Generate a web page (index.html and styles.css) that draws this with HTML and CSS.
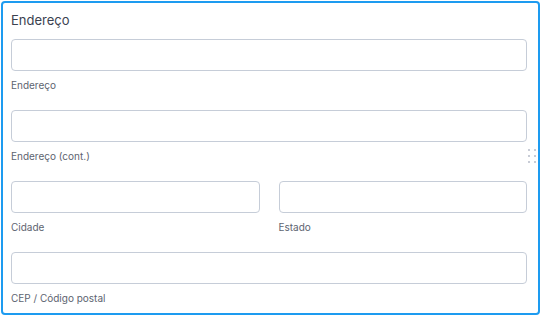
FILE: index.html
```html
<!DOCTYPE html>
<html lang="pt">
<head>
    <meta charset="UTF-8">
    <meta name="viewport" content="width=device-width, initial-scale=1.0">
    <title>Endereço</title>
    <link rel="stylesheet" href="styles.css">
</head>
<body>
    <div class="address-box">
        <div class="box-title">Endereço</div>

        <div class="field">
            <input type="text" class="field-input">
            <div class="field-label">Endereço</div>
        </div>

        <div class="field">
            <input type="text" class="field-input">
            <div class="field-label">Endereço (cont.)</div>
        </div>

        <div class="field-row">
            <div class="field">
                <input type="text" class="field-input">
                <div class="field-label">Cidade</div>
            </div>
            <div class="field">
                <input type="text" class="field-input">
                <div class="field-label">Estado</div>
            </div>
        </div>

        <div class="field last">
            <input type="text" class="field-input">
            <div class="field-label">CEP / Código postal</div>
        </div>

        <div class="drag-handle">
            <span></span><span></span>
            <span></span><span></span>
            <span></span><span></span>
        </div>
    </div>
</body>
</html>
```

FILE: styles.css
```css
body {
    margin: 0;
    padding: 1px;
    background: #fff;
    font-family: Inter, "Noto Sans", sans-serif;
}
.address-box {
    position: relative;
    width: 539px;
    height: 314px;
    box-sizing: border-box;
    border: 2px solid #1d9bf0;
    border-radius: 4px;
    padding: 8px 11px 0 8px;
}
.box-title {
    font-size: 13px;
    line-height: 18px;
    color: #3b4250;
    margin-bottom: 10px;
}
.field {
    margin-bottom: 17px;
}
.field.last {
    margin-bottom: 0;
}
.field-input {
    display: block;
    width: 100%;
    height: 32px;
    box-sizing: border-box;
    margin: 0;
    border: 1px solid #c6cdd8;
    border-radius: 4px;
    background: #fff;
}
.field-label {
    margin-top: 6px;
    font-size: 10px;
    line-height: 16px;
    color: #5d6470;
}
.field-row {
    display: grid;
    grid-template-columns: 1fr 1fr;
    column-gap: 19px;
}
.drag-handle {
    position: absolute;
    top: 146px;
    right: 2px;
    display: grid;
    grid-template-columns: 2px 2px;
    column-gap: 4px;
    row-gap: 4px;
}
.drag-handle span {
    width: 2px;
    height: 2px;
    background: #c8ccd6;
}
```
